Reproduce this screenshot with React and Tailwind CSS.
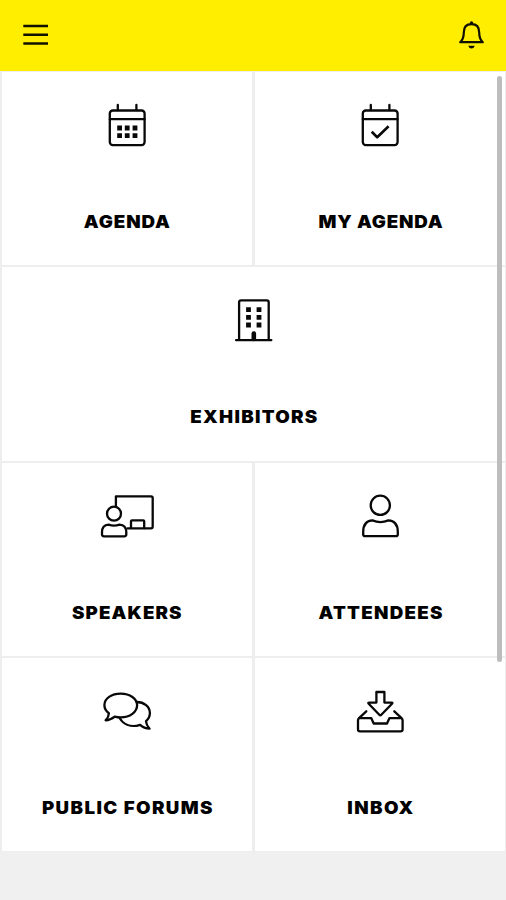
import React from "react";

const CalendarBase = () => (
  <>
    <rect x="12.8" y="10.5" width="34.8" height="34.6" rx="3" />
    <path d="M12.8 19.2H47.6M20.8 5V10M39.4 5V10" />
  </>
);

const AgendaIcon = () => (
  <>
    <CalendarBase />
    <path d="M20.2 28h4.8M27.8 28h4.8M35.6 28h4.8M20.2 35.6h4.8M27.8 35.6h4.8M35.6 35.6h4.8" strokeWidth="4.8" strokeLinecap="butt" />
  </>
);

const MyAgendaIcon = () => (
  <>
    <CalendarBase />
    <path d="M21.7 31.8 27.2 37.2 38.6 26.2" strokeLinecap="butt" strokeWidth="2.6" />
  </>
);

const ExhibitorsIcon = () => (
  <>
    <path d="M15.1 45V7.3Q15.1 5.3 17.1 5.3H42.7Q44.7 5.3 44.7 7.3V45M12.1 45.2H47.3" />
    <path d="M22.1 14.6h4.8M32.6 14.6h4.8M22.1 22.4h4.8M32.6 22.4h4.8M22.1 30h4.8M32.6 30h4.8" strokeWidth="4.8" strokeLinecap="butt" />
    <path d="M29.8 38.5V44" strokeWidth="4.6" />
  </>
);

const SpeakersIcon = () => (
  <>
    <path d="M18.9 14.5V5.3H54Q55.7 5.3 55.7 7V35.5Q55.7 37.3 54 37.3H30.5" />
    <path d="M34 37V30.3Q34 29.3 35 29.3H46.2Q47.2 29.3 47.2 30.3V37" />
    <circle cx="17" cy="22.7" r="7" />
    <path d="M11.5 33.6Q17 35.6 22.5 33.6Q29.3 33.8 29.3 41.5V43.3Q29.3 45.3 27.3 45.3H7Q5 45.3 5 43.3V41.5Q5 33.8 11.5 33.6Z" />
  </>
);

const AttendeesIcon = () => (
  <>
    <circle cx="30.3" cy="14.3" r="9.6" />
    <path d="M22.5 29.4Q30.4 32.8 38.3 29.4Q47.8 30 47.8 41V43.2Q47.8 45.2 45.8 45.2H15.2Q13.2 45.2 13.2 43.2V41Q13.2 30 22.5 29.4Z" />
  </>
);

const ForumsIcon = () => (
  <>
    <path d="M11.9 27.2C8.9 25.1 7.4 22.3 7.4 19C7.4 12.5 14.4 7.6 23.8 7.6C33 7.6 40.1 12.7 40.1 19.3C40.1 26 33 31.4 23.8 31.4C21.5 31.4 19.5 31.1 17.7 30.6Q13.5 34.1 8.6 34.3Q11.8 31 11.9 27.2Z" />
    <path d="M39.8 16C47 16 52.9 20.8 52.9 27C52.9 30.4 51.4 33.1 49 35.2Q49.2 39 52.6 42.7Q47 42.4 43.2 38.8C34 41.8 26.5 38.7 22.6 32" />
  </>
);

const InboxIcon = () => (
  <>
    <path d="M26.4 6H34.4V16.6H41.7Q43 16.6 42 17.7L31.3 28.8Q30.3 29.8 29.3 28.8L18.7 17.7Q17.7 16.6 19.1 16.6H26.4Z" />
    <path d="M16.3 25.3 9 32.1Q8 33 8 34.4V43.3Q8 45.4 10 45.4H50.6Q52.6 45.4 52.6 43.3V34.4Q52.6 33 51.6 32.1L44.3 25.3M9 32.1H21.2L23.7 37.5H37L39.5 32.1H51.6" />
  </>
);

const tiles = [
  { label: "AGENDA", icon: AgendaIcon, spacing: "tracking-[0.9px]" },
  { label: "MY AGENDA", icon: MyAgendaIcon, spacing: "tracking-[0.75px]" },
  { label: "EXHIBITORS", icon: ExhibitorsIcon, spacing: "tracking-[1.2px]", wide: true },
  { label: "SPEAKERS", icon: SpeakersIcon, spacing: "tracking-[1.05px]" },
  { label: "ATTENDEES", icon: AttendeesIcon, spacing: "tracking-[1.2px]" },
  { label: "PUBLIC FORUMS", icon: ForumsIcon, spacing: "tracking-[1.3px]" },
  { label: "INBOX", icon: InboxIcon, spacing: "tracking-[1.3px]" },
];

const Tile = ({ label, icon: Icon, spacing, wide }) => (
  <button className={`flex flex-col items-center bg-white pt-[28px] ${wide ? "col-span-2" : ""}`}>
    <svg
      width="60"
      height="50"
      viewBox="0 0 60 50"
      fill="none"
      stroke="#080808"
      strokeWidth="2.3"
      strokeLinecap="round"
      strokeLinejoin="round"
    >
      <Icon />
    </svg>
    <span className={`mt-[60px] scale-x-[1.07] pl-[1.5px] whitespace-nowrap text-[17.5px] leading-6 font-black text-black ${spacing}`}>
      {label}
    </span>
  </button>
);

const App = () => {
  return (
    <div className="relative h-[900px] w-[506px] overflow-hidden bg-[#f0f0f0] font-['Inter',sans-serif]">
      <header className="flex h-[71px] items-start justify-between bg-[#ffee00] pt-[19px] pr-[19px] pl-[20px]">
        <button aria-label="Menu">
          <svg width="32" height="32" viewBox="0 0 32 32" stroke="#111100" strokeWidth="2.5">
            <path d="M3.3 7H28M3.3 15.8H28M3.3 24.6H28" />
          </svg>
        </button>
        <button aria-label="Notifications">
          <svg width="32" height="32" viewBox="0 0 32 32" fill="none" stroke="#111100" strokeWidth="2.2" strokeLinejoin="round">
            <path d="M5.2 23.2Q8.8 19.8 8.8 13.5Q8.8 5.2 16.5 5.2Q24.2 5.2 24.2 13.5Q24.2 19.8 27.8 23.2Z" />
            <circle cx="16.5" cy="3.9" r="1.7" fill="#111100" stroke="none" />
            <path d="M13.2 26.8H19.8Q19 29.5 16.5 29.5Q14 29.5 13.2 26.8Z" fill="#111100" stroke="none" />
          </svg>
        </button>
      </header>

      <main className="grid h-[781px] grid-cols-2 grid-rows-4 gap-x-[3px] gap-y-[2px] bg-[#eeeeee] pt-px pr-px pb-px pl-[2px]">
        {tiles.map((tile) => (
          <Tile key={tile.label} {...tile} />
        ))}
      </main>

      {/* scroll thumb */}
      <div className="absolute top-[76px] right-[4px] h-[586px] w-[5px] rounded-sm bg-[#bdbdbd]" />
    </div>
  );
};

export default App;
